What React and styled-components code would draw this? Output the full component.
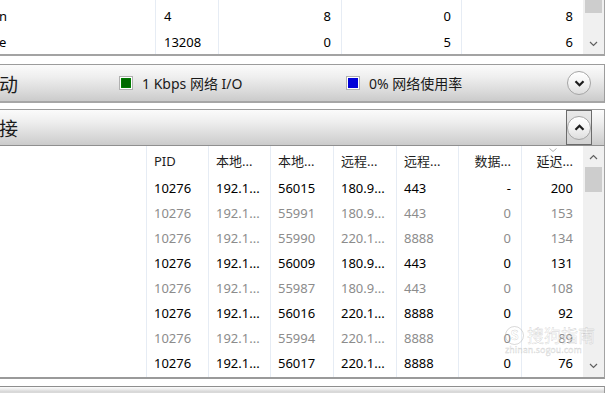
import React from 'react';
import styled, { createGlobalStyle } from 'styled-components';

const Global = createGlobalStyle`
  *, *::before, *::after { box-sizing: border-box; }
  html, body { margin: 0; padding: 0; background: #ffffff; overflow: hidden; }
  body { font-family: "Noto Sans", "Noto Sans CJK SC", sans-serif; color: #000; }
`;

const Page = styled.div`
  position: relative;
  width: 609px;
  height: 393px;
  margin-left: -2px;
  padding-right: 2px;
  overflow: hidden;
  display: flex;
  flex-direction: column;
`;

/* ---------- generic list parts ---------- */
const Panel = styled.div`
  display: flex;
  border-right: 1px solid #a3a3a3;
  border-bottom: 2px solid #a3a3a3;
  height: ${p => p.$h}px;
  flex-shrink: 0;
  background: #fff;
`;

const ListArea = styled.div`
  flex: 1;
  display: flex;
  flex-direction: column;
  overflow: hidden;
`;

const Row = styled.div`
  display: grid;
  grid-template-columns: ${p => p.$cols};
  height: ${p => p.$h || 25}px;
  flex-shrink: 0;
  font-size: 13px;
  color: ${p => (p.$dim ? '#8c8c8c' : '#000')};
`;

const Cell = styled.div`
  position: relative;
  display: flex;
  align-items: ${p => (p.$bottom ? 'flex-end' : 'center')};
  padding: ${p => (p.$bottom ? '0 0 4px' : '0')};
  justify-content: ${p => (p.$right ? 'flex-end' : 'flex-start')};
  padding-left: ${p => (p.$right ? 0 : p.$pl ?? 8)}px;
  padding-right: ${p => (p.$right ? 10 : 0)}px;
  border-left: ${p => (p.$first ? 'none' : '1px solid #e6ecf4')};
  white-space: nowrap;
  overflow: hidden;
`;

const HeadCell = styled(Cell)`
  color: #1e1e1e;
`;

const SortMark = styled.svg`
  position: absolute;
  left: 50%;
  top: 2px;
  margin-left: -4px;
`;

const FillRest = styled.div`
  flex: 1;
  display: grid;
  grid-template-columns: ${p => p.$cols};
`;

/* ---------- scrollbar ---------- */
const ScrollBar = styled.div`
  width: 21px;
  flex-shrink: 0;
  background: #f0f0f0;
  display: flex;
  flex-direction: column;
`;

const ScrollArrow = styled.div`
  height: ${p => p.$h || 21}px;
  display: flex;
  align-items: center;
  justify-content: center;
  flex-shrink: 0;
`;

const Thumb = styled.div`
  height: ${p => p.$h}px;
  margin: 0 2px;
  background: #cdcdcd;
  flex-shrink: 0;
`;

const Spacer = styled.div`
  flex: 1;
`;

const Arrow = ({ up }) => (
  <svg width="9" height="6" viewBox="0 0 9 6">
    <path
      d={up ? 'M1 5 L4.5 1.5 L8 5' : 'M1 1 L4.5 4.5 L8 1'}
      fill="none"
      stroke="#606060"
      strokeWidth="1.2"
    />
  </svg>
);

/* ---------- section headers ---------- */
const HeaderBar = styled.div`
  height: ${p => p.$h}px;
  flex-shrink: 0;
  margin-top: ${p => p.$mt}px;
  display: flex;
  align-items: center;
  border-top: 1px solid #9c9c9c;
  border-right: 1px solid #9c9c9c;
  border-bottom: ${p => (p.$open ? '1px solid #8f8f8f' : '2px solid #a6a6a6')};
  background: linear-gradient(#fbfbfb 0%, #eeeeee 35%, #d9d9d9 75%, #cbcbcb 100%);
`;

const Title = styled.div`
  width: ${p => p.$w}px;
  flex-shrink: 0;
  font-family: "Noto Sans CJK SC", sans-serif;
  font-size: 19px;
  color: #1a1a1a;
  padding-left: 1px;
  line-height: 1;
`;

const Legend = styled.div`
  display: flex;
  align-items: center;
  gap: 9px;
  width: ${p => (p.$w ? `${p.$w}px` : 'auto')};
  flex: ${p => (p.$w ? '0 0 auto' : '1')};
  font-size: 14px;
  color: #1a1a1a;
`;

const Swatch = ({ color, grid }) => (
  <svg width="14" height="14" viewBox="0 0 14 14">
    <rect x="0.5" y="0.5" width="13" height="13" fill="#ffffff" stroke="#b0b0b0" />
    <rect x="2" y="2" width="10" height="10" fill={color} />
    {grid &&
      [4, 6, 8, 10].map(v => (
        <g key={v}>
          <line x1={v} y1="2" x2={v} y2="12" stroke="#004400" strokeWidth="0.6" />
          <line x1="2" y1={v} x2="12" y2={v} stroke="#004400" strokeWidth="0.6" />
        </g>
      ))}
  </svg>
);

const BtnFrame = styled.div`
  width: 26px;
  align-self: stretch;
  margin-right: 12px;
  display: flex;
  align-items: center;
  justify-content: center;
  border: 1px solid ${p => (p.$focus ? '#6b6b6b' : 'transparent')};
  background: ${p => (p.$focus ? 'linear-gradient(#e9e9e9, #d2d2d2)' : 'transparent')};
`;

const RoundBtn = styled.div`
  width: 24px;
  height: 24px;
  border-radius: 50%;
  border: 1px solid #a5a5a5;
  background: linear-gradient(#ffffff 0%, #f3f3f3 50%, #dedede 100%);
  box-shadow: inset 0 1px 0 #fff;
  display: flex;
  align-items: center;
  justify-content: center;
`;

const Chevron = ({ up }) => (
  <svg width="11" height="7" viewBox="0 0 11 7">
    <path
      d={up ? 'M1.5 5.8 L5.5 1.8 L9.5 5.8' : 'M1.5 1.2 L5.5 5.2 L9.5 1.2'}
      fill="none"
      stroke="#1c1c1c"
      strokeWidth="2.2"
    />
  </svg>
);

/* ---------- connections section ---------- */
const Section = styled.div`
  display: flex;
  flex-direction: column;
  flex-shrink: 0;
  margin-top: ${p => p.$mt}px;
`;

const TablePanel = styled.div`
  display: flex;
  height: 233px;
  border-right: 1px solid #a3a3a3;
  border-bottom: 2px solid #9a9a9a;
  background: #fff;
`;

const NextHeader = styled.div`
  margin-top: 7px;
  height: 40px;
  border-top: 1px solid #8e8e8e;
  border-right: 1px solid #9c9c9c;
  background: linear-gradient(#fbfbfb 0%, #eeeeee 35%, #d9d9d9 75%);
`;

const Watermark = styled.div`
  position: absolute;
  left: 507px;
  top: 326px;
  display: flex;
  flex-direction: column;
  align-items: flex-start;
  pointer-events: none;
  color: rgba(255, 255, 255, 0.55);
  -webkit-text-stroke: 0.4px rgba(150, 150, 150, 0.45);
`;

const WmLine = styled.div`
  display: flex;
  align-items: center;
  gap: 3px;
  font-family: "Noto Sans CJK SC", sans-serif;
  font-size: ${p => p.$size}px;
  line-height: 1.1;
`;

const WmLogo = styled.div`
  width: 19px;
  height: 19px;
  border-radius: 50%;
  border: 1.5px solid rgba(170, 170, 170, 0.45);
  display: flex;
  align-items: center;
  justify-content: center;
  font-size: 13px;
  font-weight: 700;
`;

const topCols = '157px 63px 123px 120px 122px';
const topRows = [
  ['n', '4', '8', '0', '8'],
  ['e', '13208', '0', '5', '6'],
];

const connCols = '148px 62px 62px 63px 63px 62px 63px 62px';
const connHead = ['', 'PID', '本地...', '本地...', '远程...', '远程...', '数据...', '延迟...'];
const connRows = [
  ['56015', '180.9...', '443', '-', '200', false],
  ['55991', '180.9...', '443', '0', '153', true],
  ['55990', '220.1...', '8888', '0', '134', true],
  ['56009', '180.9...', '443', '0', '131', false],
  ['55987', '180.9...', '443', '0', '108', true],
  ['56016', '220.1...', '8888', '0', '92', false],
  ['55994', '220.1...', '8888', '0', '89', true],
  ['56017', '220.1...', '8888', '0', '76', false],
];

export default function App() {
  return (
    <>
      <Global />
      <Page>
        <Panel $h={56}>
          <ListArea>
            {topRows.map((r, i) => (
              <Row key={i} $cols={topCols} $h={i === 0 ? 29 : 25}>
                <Cell $first $pl={1} $bottom={i === 0}>{r[0]}</Cell>
                <Cell $bottom={i === 0}>{r[1]}</Cell>
                <Cell $right $bottom={i === 0}>{r[2]}</Cell>
                <Cell $right $bottom={i === 0}>{r[3]}</Cell>
                <Cell $right $bottom={i === 0}>{r[4]}</Cell>
              </Row>
            ))}
            <FillRest $cols={topCols}>
              <Cell $first />
              <Cell />
              <Cell />
              <Cell />
              <Cell />
            </FillRest>
          </ListArea>
          <ScrollBar>
            <Thumb $h={13} />
            <Spacer />
            <ScrollArrow $h={20}>
              <Arrow />
            </ScrollArrow>
          </ScrollBar>
        </Panel>

        <HeaderBar $h={39} $mt={8}>
          <Title $w={121}>动</Title>
          <Legend $w={227}>
            <Swatch color="#009000" grid />
            <span>1 Kbps 网络 I/O</span>
          </Legend>
          <Legend>
            <Swatch color="#0000d8" />
            <span>0% 网络使用率</span>
          </Legend>
          <BtnFrame>
            <RoundBtn>
              <Chevron />
            </RoundBtn>
          </BtnFrame>
        </HeaderBar>

        <Section $mt={6}>
          <HeaderBar $h={37} $mt={0} $open>
            <Title $w={121}>接</Title>
            <Spacer />
            <BtnFrame $focus>
              <RoundBtn>
                <Chevron up />
              </RoundBtn>
            </BtnFrame>
          </HeaderBar>
          <TablePanel>
            <ListArea>
              <Row $cols={connCols} $h={29}>
                {connHead.map((h, i) => (
                  <HeadCell key={i} $first={i === 0} $pl={7} $right={i >= 6}>
                    {i === 7 && (
                      <SortMark width="8" height="4" viewBox="0 0 8 4">
                        <path d="M0.5 0.5 L4 3.5 L7.5 0.5" fill="none" stroke="#a8a8a8" strokeWidth="0.9" />
                      </SortMark>
                    )}
                    {h}
                  </HeadCell>
                ))}
              </Row>
              {connRows.map((r, i) => (
                <Row key={i} $cols={connCols} $dim={r[5]}>
                  <Cell $first />
                  <Cell $pl={7}>10276</Cell>
                  <Cell $pl={7}>192.1...</Cell>
                  <Cell $pl={7}>{r[0]}</Cell>
                  <Cell $pl={7}>{r[1]}</Cell>
                  <Cell $pl={7}>{r[2]}</Cell>
                  <Cell $right>{r[3]}</Cell>
                  <Cell $right>{r[4]}</Cell>
                </Row>
              ))}
              <FillRest $cols={connCols}>
                <Cell $first />
                <Cell />
                <Cell />
                <Cell />
                <Cell />
                <Cell />
                <Cell />
                <Cell />
              </FillRest>
            </ListArea>
            <ScrollBar>
              <ScrollArrow $h={21}>
                <Arrow up />
              </ScrollArrow>
              <Thumb $h={25} />
              <Spacer />
              <ScrollArrow $h={22}>
                <Arrow />
              </ScrollArrow>
            </ScrollBar>
          </TablePanel>
        </Section>

        <NextHeader />

        <Watermark>
          <WmLine $size={17}>
            <WmLogo>S</WmLogo>
            <span>搜狗指南</span>
          </WmLine>
          <WmLine $size={9}>zhinan.sogou.com</WmLine>
        </Watermark>
      </Page>
    </>
  );
}
